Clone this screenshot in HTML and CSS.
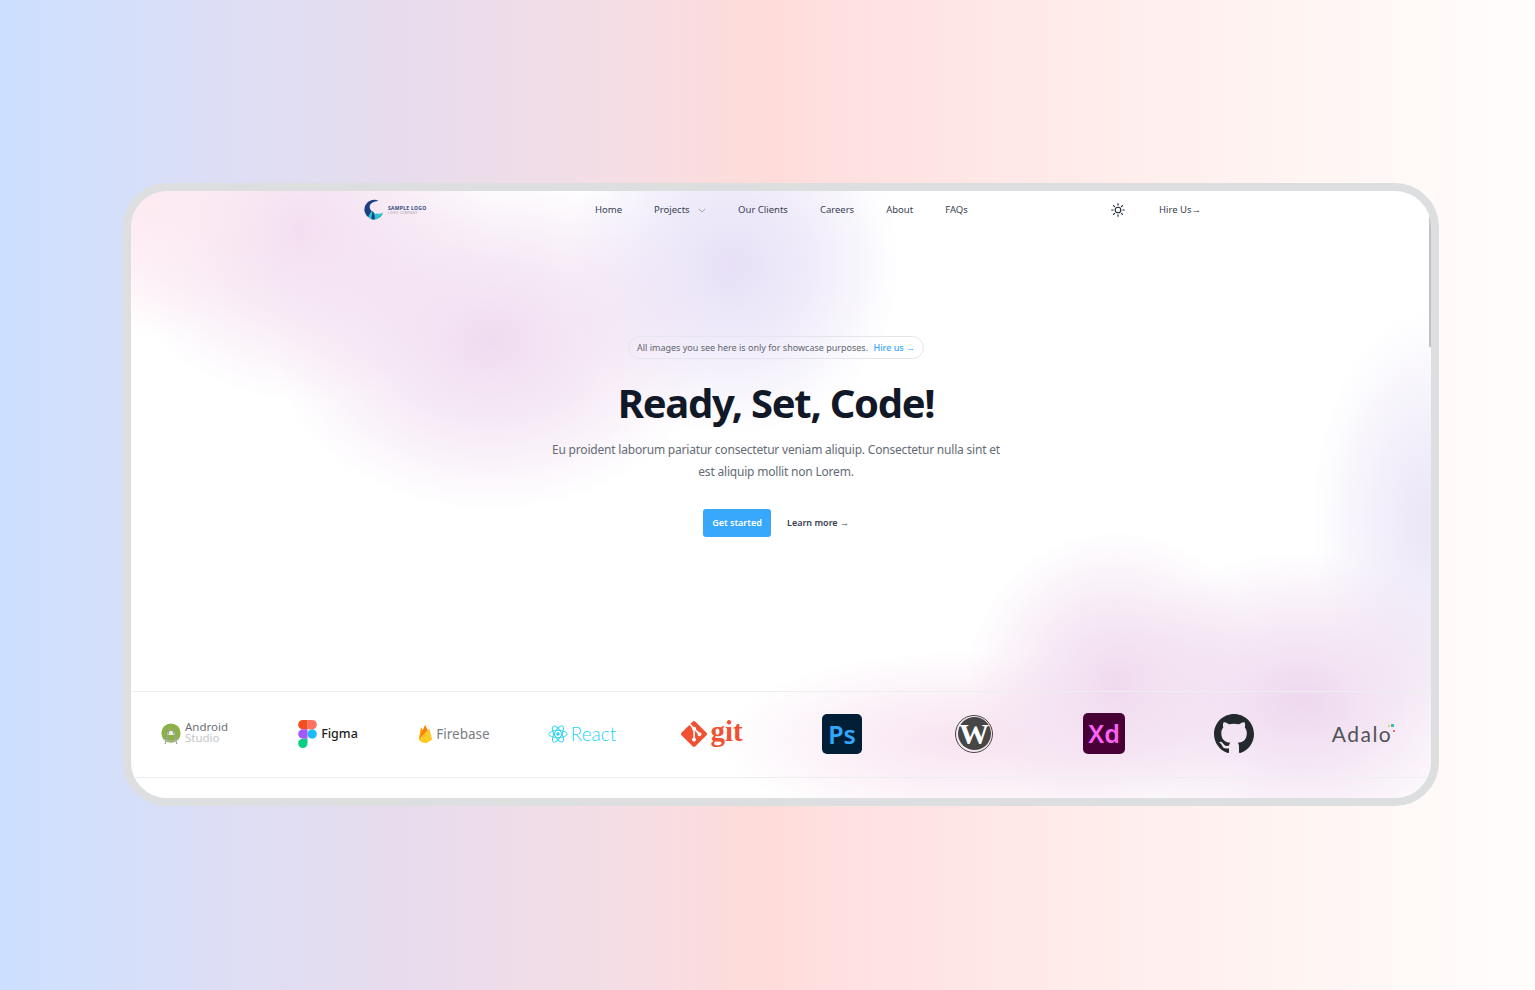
FILE: index.html
```html
<!DOCTYPE html>
<html lang="en">
<head>
    <meta charset="UTF-8">
    <meta name="viewport" content="width=device-width, initial-scale=1.0">
    <title>Ready, Set, Code!</title>
    <link rel="stylesheet" href="styles.css">
</head>
<body>
    <div class="frame">
        <div class="scrollbar"></div>

        <!-- Top navigation -->
        <header class="nav">
            <a class="brand" href="#">
                <svg class="brand-mark" viewBox="0 0 24 24" width="22" height="22">
                    <path d="M17 2.2A10.5 10.5 0 1 0 21.5 16 C18 18.5 12 17 11 14 C8 13 5.5 8 9 5 C11 3 14.500 2 17 2.2Z" fill="#1d3f86"/>
                    <path d="M6 19 C8 15 9 13 10.500 13 C12 15.500 14 17 15 15.500 C16 16.500 19 16.500 22 14.500 C20 20 15 23.500 10.500 22.500 C8.500 22 7 21 6 19Z" fill="#2cc4c9"/>
                    <path d="M10.500 13 C12 16 13.500 19 12.800 22.400 C11 22.600 9.600 22 9 21.400 C9.600 18.500 10 16 10.500 13Z" fill="#1d3f86"/>
                </svg>
                <span class="brand-text">
                    <span class="brand-name">SAMPLE LOGO</span>
                    <span class="brand-sub">LOGO COMPANY</span>
                </span>
            </a>
            <nav class="nav-links">
                <a href="#">Home</a>
                <a href="#" class="has-menu">Projects
                    <svg viewBox="0 0 10 6" width="8" height="5"><path d="M1 1l4 4 4-4" fill="none" stroke="#8b929c" stroke-width="1"/></svg>
                </a>
                <a href="#">Our Clients</a>
                <a href="#">Careers</a>
                <a href="#">About</a>
                <a href="#">FAQs</a>
            </nav>
            <svg class="sun" viewBox="0 0 24 24" width="16" height="16" fill="none" stroke="#1f2937" stroke-width="1.700" stroke-linecap="round">
                <circle cx="12" cy="12" r="4.200"/>
                <path d="M12 2.500v2.200M12 19.300v2.200M2.500 12h2.200M19.300 12h2.200M5.300 5.300l1.500 1.500M17.200 17.200l1.500 1.500M5.300 18.700l1.500-1.500M17.200 6.800l1.500-1.500"/>
            </svg>
            <a class="hire" href="#">Hire Us<span class="arrow">→</span></a>
        </header>

        <!-- Hero -->
        <main class="hero">
            <div class="notice">All images you see here is only for showcase purposes. <a href="#">Hire us <span class="arrow">→</span></a></div>
            <h1>Ready, Set, Code!</h1>
            <p>Eu proident laborum pariatur consectetur veniam aliquip. Consectetur nulla sint et est aliquip mollit non Lorem.</p>
            <div class="actions">
                <a class="btn-primary" href="#">Get started</a>
                <a class="btn-link" href="#">Learn more <span class="arrow">→</span></a>
            </div>
        </main>

        <!-- Tool logos -->
        <section class="logos">
            <div class="logo">
                <svg viewBox="0 0 24 24" width="22" height="24">
                    <circle cx="12" cy="11" r="10.500" fill="#8cb14a"/>
                    <path d="M7.500 13a4.500 4.500 0 0 1 9 0z" fill="#e8efe0"/>
                    <path d="M10.500 6l-5 17M13.500 6l5 17" stroke="#9aa39a" stroke-width="1.300" fill="none"/>
                    <path d="M3 17c5 3.500 13 3.500 18 0" stroke="#aeb5ae" stroke-width="1.200" fill="none"/>
                </svg>
                <span class="android-text"><span>Android</span><span class="studio">Studio</span></span>
            </div>
            <div class="logo logo-figma">
                <svg viewBox="0 0 38 57" width="19" height="28">
                    <path d="M19 28.500a9.500 9.500 0 1 1 19 0 9.500 9.500 0 0 1-19 0z" fill="#1abcfe"/>
                    <path d="M0 47.500A9.500 9.500 0 0 1 9.500 38H19v9.500a9.500 9.500 0 1 1-19 0z" fill="#0acf83"/>
                    <path d="M19 0v19h9.500a9.500 9.500 0 1 0 0-19z" fill="#ff7262"/>
                    <path d="M0 9.500A9.500 9.500 0 0 0 9.500 19H19V0H9.500A9.500 9.500 0 0 0 0 9.500z" fill="#f24e1e"/>
                    <path d="M0 28.500A9.500 9.500 0 0 0 9.500 38H19V19H9.500A9.500 9.500 0 0 0 0 28.500z" fill="#a259ff"/>
                </svg>
                <span class="figma-text">Figma</span>
            </div>
            <div class="logo">
                <svg viewBox="0 0 18 24" width="15" height="20">
                    <path d="M1 18.500L3.500 4 8 10.500z" fill="#ffa000"/>
                    <path d="M8.500 1L12 8 1 18.500z" fill="#f5820d"/>
                    <path d="M13.500 5.500L17 18.500 10 23 4 22 1 18.500z" fill="#ffca28"/>
                </svg>
                <span class="firebase-text">Firebase</span>
            </div>
            <div class="logo logo-back">
                <svg viewBox="0 0 24 24" width="20" height="20" fill="none" stroke="#22d3f5" stroke-width="1.100">
                    <ellipse cx="12" cy="12" rx="11" ry="4.300"/>
                    <ellipse cx="12" cy="12" rx="11" ry="4.300" transform="rotate(60 12 12)"/>
                    <ellipse cx="12" cy="12" rx="11" ry="4.300" transform="rotate(120 12 12)"/>
                    <circle cx="12" cy="12" r="2" fill="#22d3f5" stroke="none"/>
                </svg>
                <span class="react-text">React</span>
            </div>
            <div class="logo logo-back">
                <svg viewBox="0 0 24 24" width="26" height="26">
                    <path fill="#f05133" d="M23.546 10.930L13.067.452c-.604-.603-1.582-.603-2.188 0L8.708 2.627l2.760 2.760c.645-.215 1.379-.07 1.889.441.516.515.658 1.258.438 1.900l2.658 2.660c.645-.223 1.387-.078 1.900.435.721.72.721 1.884 0 2.604-.719.719-1.881.719-2.600 0-.539-.541-.674-1.337-.404-1.996L12.860 8.955v6.525c.176.086.342.2.488.348.713.721.713 1.883 0 2.600-.719.721-1.889.721-2.609 0-.719-.719-.719-1.879 0-2.598.182-.18.387-.316.605-.406V8.835c-.217-.091-.424-.222-.6-.401-.545-.545-.676-1.342-.396-2.009L7.636 3.700.45 10.881c-.6.605-.6 1.584 0 2.189l10.480 10.477c.604.604 1.582.604 2.186 0l10.430-10.430c.605-.603.605-1.582 0-2.187"/>
                </svg>
                <span class="git-text">git</span>
            </div>
            <div class="logo logo-back">
                <div class="app-tile ps">Ps</div>
            </div>
            <div class="logo">
                <div class="wp"><span>W</span></div>
            </div>
            <div class="logo">
                <div class="app-tile xd">Xd</div>
            </div>
            <div class="logo">
                <svg viewBox="0 0 16 16" width="40" height="40">
                    <path fill="#24292e" d="M8 0C3.580 0 0 3.580 0 8c0 3.540 2.290 6.530 5.470 7.590.4.070.55-.17.55-.38 0-.19-.01-.82-.01-1.490-2.010.37-2.530-.49-2.690-.94-.09-.23-.48-.94-.82-1.130-.28-.15-.68-.52-.01-.53.63-.01 1.080.58 1.230.82.72 1.210 1.870.87 2.330.66.07-.52.28-.87.51-1.070-1.780-.2-3.640-.89-3.640-3.950 0-.87.31-1.590.82-2.150-.08-.2-.36-1.020.08-2.120 0 0 .67-.21 2.200.82.64-.18 1.320-.27 2-.27.68 0 1.360.09 2 .27 1.530-1.040 2.200-.82 2.200-.82.44 1.100.16 1.920.08 2.120.51.56.82 1.270.82 2.150 0 3.070-1.870 3.750-3.650 3.950.29.25.54.73.54 1.480 0 1.070-.01 1.930-.01 2.200 0 .21.15.46.55.38A8.013 8.013 0 0 0 16 8c0-4.420-3.580-8-8-8z"/>
                </svg>
            </div>
            <div class="logo logo-back">
                <span class="adalo-text">Adalo<i class="dot dot-a"></i><i class="dot dot-b"></i><i class="dot dot-c"></i></span>
            </div>
        </section>
    </div>
</body>
</html>
```

FILE: styles.css
```css
* {
    box-sizing: border-box;
}
body {
    margin: 0;
    height: 990px;
    overflow: hidden;
    padding: 183px 0 0 123px;
    font-family: "Noto Sans", "Open Sans", sans-serif;
    background: linear-gradient(90deg, #cce0ff 0%, #dcdef5 14%, #e6dcee 25%, #f0dde8 35%, #f8dde1 44%, #ffdcd9 50%, #ffdfe0 54%, #ffe8e7 65%, #fff5f3 85%, #fffdfc 100%);
}
a {
    text-decoration: none;
    color: inherit;
}
.arrow {
    font-family: "Liberation Sans", sans-serif;
}
.frame {
    position: relative;
    width: 1316px;
    height: 623px;
    border: 8px solid #dcdee0;
    border-radius: 44px;
    overflow: hidden;
    display: flex;
    flex-direction: column;
    background-color: #fff;
    background-image:
        radial-gradient(ellipse 170px 150px at 0 0, rgba(253, 232, 240, 1) 0%, rgba(253, 232, 240, 0.55) 50%, rgba(253, 232, 240, 0) 100%),
        radial-gradient(ellipse 190px 170px at 170px 40px, rgba(243, 222, 240, 1) 0%, rgba(243, 222, 240, 0.6) 50%, rgba(243, 222, 240, 0) 100%),
        radial-gradient(ellipse 220px 170px at 360px 150px, rgba(240, 220, 240, 1) 0%, rgba(240, 220, 240, 0.6) 50%, rgba(240, 220, 240, 0) 100%),
        radial-gradient(ellipse 170px 170px at 600px 75px, rgba(231, 224, 247, 1) 0%, rgba(231, 224, 247, 0.6) 50%, rgba(231, 224, 247, 0) 100%),
        radial-gradient(ellipse 150px 150px at 985px 490px, rgba(240, 218, 238, 1) 0%, rgba(240, 218, 238, 0.55) 50%, rgba(240, 218, 238, 0) 100%),
        radial-gradient(ellipse 200px 150px at 1170px 510px, rgba(238, 216, 238, 1) 0%, rgba(238, 216, 238, 0.55) 50%, rgba(238, 216, 238, 0) 100%),
        radial-gradient(ellipse 240px 90px at 830px 550px, rgba(248, 228, 241, 1) 0%, rgba(248, 228, 241, 0.55) 50%, rgba(248, 228, 241, 0) 100%),
        radial-gradient(ellipse 120px 210px at 1300px 330px, rgba(235, 229, 247, 1) 0%, rgba(235, 229, 247, 0.55) 50%, rgba(235, 229, 247, 0) 100%);
}
.scrollbar {
    position: absolute;
    top: 0;
    right: 0;
    width: 2px;
    height: 156px;
    background-color: #bfc2c6;
}

/* nav */
.nav {
    display: flex;
    align-items: center;
    height: 38px;
    padding-left: 232px;
    font-size: 9.500px;
    color: #374151;
}
.brand {
    display: flex;
    align-items: center;
    gap: 3px;
    width: 232px;
    margin-top: -1px;
}
.brand-text {
    display: flex;
    flex-direction: column;
    gap: 1px;
}
.brand-name {
    font-size: 5px;
    line-height: 6px;
    font-weight: 700;
    letter-spacing: 0.3px;
    color: #33477e;
}
.brand-sub {
    font-size: 3px;
    line-height: 3px;
    letter-spacing: 0.5px;
    color: #9a9ea8;
}
.nav-links {
    display: flex;
    align-items: center;
    gap: 32px;
    width: 515px;
    padding-bottom: 2px;
}
.has-menu svg {
    margin-left: 6px;
}
.sun {
    flex: none;
}
.hire {
    margin-left: 33px;
    padding-bottom: 2px;
}

/* hero */
.hero {
    flex: 1;
    display: flex;
    flex-direction: column;
    align-items: center;
    padding: 107px 10px 0 0;
}
.notice {
    height: 23px;
    padding: 0 8px;
    border: 1px solid #e5e6ec;
    border-radius: 12px;
    font-size: 9px;
    line-height: 21px;
    color: #5f6772;
}
.notice a {
    margin-left: 3px;
    font-weight: 500;
    color: #38a8fd;
}
.hero h1 {
    margin: 17px 0 0;
    font-size: 40px;
    line-height: 54px;
    font-weight: 700;
    letter-spacing: -1.300px;
    color: #111827;
}
.hero p {
    width: 456px;
    margin: 9px 0 0;
    text-align: center;
    font-size: 12px;
    letter-spacing: -0.200px;
    line-height: 22px;
    color: #646b76;
}
.actions {
    display: flex;
    align-items: center;
    gap: 16px;
    margin-top: 26px;
}
.btn-primary {
    width: 68px;
    height: 28px;
    border-radius: 3px;
    background-color: #38a8fd;
    color: #fff;
    font-size: 9px;
    font-weight: 600;
    line-height: 28px;
    text-align: center;
}
.btn-link {
    font-size: 9px;
    font-weight: 600;
    color: #374151;
    padding-bottom: 1px;
}

/* logos row */
.logos {
    display: grid;
    grid-template-columns: repeat(10, 130px);
    align-items: center;
    height: 87px;
    margin-bottom: 20px;
    padding-bottom: 2px;
    border-top: 1px solid #eceef0;
    border-bottom: 1px solid #eceef0;
}
.logo {
    display: flex;
    align-items: center;
    justify-content: center;
    gap: 3px;
    margin-left: -4px;
}
.logo-figma {
    margin-left: 4px;
    gap: 4px;
}
.logo-back {
    margin-left: -8px;
}
.android-text {
    display: flex;
    flex-direction: column;
    font-size: 11.500px;
    line-height: 11px;
    color: #6d6f72;
    margin-top: -3px;
}
.android-text span {
    height: 11px;
    overflow: visible;
}
.studio {
    color: #c4c6c8;
}
.figma-text {
    font-size: 12.500px;
    font-weight: 500;
    color: #1e1e1e;
}
.firebase-text {
    font-size: 13.500px;
    color: #7b7e82;
}
.react-text {
    font-size: 19px;
    font-weight: 300;
    font-family: "Lato", sans-serif;
    color: #22d3f5;
}
.git-text {
    font-family: "Liberation Serif", serif;
    font-size: 29px;
    line-height: 26px;
    font-weight: 700;
    color: #f05133;
    margin-top: -5px;
}
.app-tile {
    width: 40px;
    height: 40px;
    border-radius: 5px;
    text-align: center;
    font-size: 25px;
    font-weight: 600;
    line-height: 40px;
}
.ps {
    background-color: #001e36;
    color: #31a8ff;
}
.xd {
    width: 42px;
    height: 41px;
    background-color: #470137;
    color: #ff61f6;
}
.wp {
    width: 38px;
    height: 38px;
    border: 1px solid #464646;
    border-radius: 50%;
    padding: 1.500px;
}
.wp span {
    display: block;
    width: 33px;
    height: 33px;
    border-radius: 50%;
    background-color: #464646;
    color: #fff;
    font-family: "Liberation Serif", serif;
    font-size: 30px;
    font-weight: 700;
    line-height: 33px;
    text-align: center;
}
.adalo-text {
    position: relative;
    font-family: "Lato", sans-serif;
    font-size: 21px;
    letter-spacing: 1.500px;
    color: #505256;
}
.dot {
    position: absolute;
    width: 3px;
    height: 3px;
}
.dot-a {
    top: 3px;
    right: -2px;
    background-color: #2ec4b6;
}
.dot-b {
    top: 4px;
    right: 2px;
    width: 2px;
    height: 2px;
    background-color: #f5c84c;
}
.dot-c {
    top: 9px;
    right: -3px;
    width: 2px;
    height: 2px;
    background-color: #ef6f6c;
}
```
